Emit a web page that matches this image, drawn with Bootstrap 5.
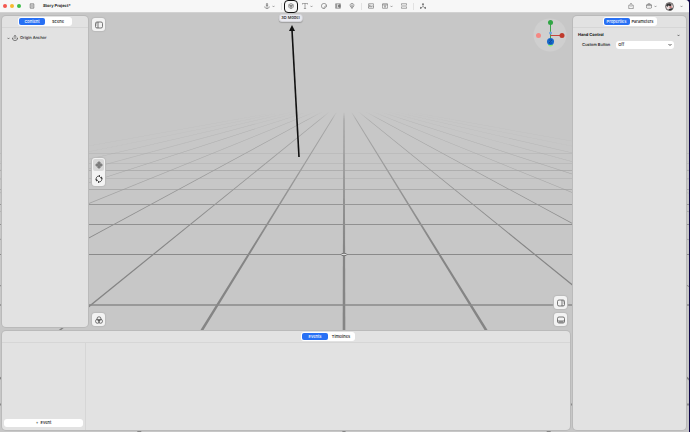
<!DOCTYPE html>
<html lang="en">
<head>
<meta charset="utf-8">
<meta name="viewport" content="width=device-width, initial-scale=1">
<title>Story Project</title>
<link href="https://cdn.jsdelivr.net/npm/bootstrap@5.3.0/dist/css/bootstrap.min.css" rel="stylesheet">
<style>
body{font-family:Inter,"Liberation Sans",sans-serif;font-size:4px;line-height:6px;font-weight:500;color:#111;background:#10084a;text-rendering:geometricPrecision}
.app-window{height:100vh;margin-right:1px;background:#c7c7c7;border-radius:0 4px 0 0;overflow:hidden}
button{font:inherit;color:inherit;border:0;background:none;padding:0}
svg{display:block;fill:none;stroke:currentColor;stroke-width:1.4;flex:none}
.title-bar{height:13px;background:#f7f7f7;border-bottom:1px solid #d2d2d2;display:grid;grid-template-columns:1fr auto 1fr;color:#555}
.title-bar svg{width:6px;height:6px}
.traffic{gap:3px;padding-left:3px}
.dot{width:4px;height:4px;border-radius:50%}
.red{background:#f4574f}.yellow{background:#f6b92e}.green{background:#3dbd48}
.doc-name{font-weight:700;color:#222}
.tool{min-width:6px;height:12px;display:flex;align-items:center;justify-content:center;gap:2px;position:relative}
.title-bar svg.chev,.chev{width:3px;height:3px}
.title-bar svg.avatar{width:9px;height:9px}
.tools{gap:8px}
.window-tools{gap:8px;padding-right:6px}
.divider{width:1px;height:7px;margin:0 -2px;background:#e2e2e2}
.tool.picked::before{content:"";position:absolute;width:14px;height:13px;border:1px solid #111;border-radius:4px;top:0;left:-4px}
.tip{position:absolute;top:14px;left:50%;transform:translateX(-50%);white-space:nowrap;background:#eaeaf0;border:1px solid #d7d7dc;border-radius:3px;padding:0 2px;height:8px;line-height:6px;color:#222;box-shadow:0 1px 1px #0003;z-index:5}
.stage{isolation:isolate;padding:3px 3px 2px 2px;gap:3px}
.floor{position:absolute;inset:0;width:100%;height:100%;z-index:-1}
.pane{background:#e2e2e2;border-radius:4px;box-shadow:0 0 0 1px #bababa}
.side-left{width:86px}.side-right{width:113px}
.pane-head{height:12px;border-bottom:1px solid #d6d6d6;display:flex;justify-content:center;align-items:center}
.seg{background:#fff;border-radius:3px;display:flex;height:9px;padding:1px}
.seg button{border-radius:2px;width:26px;text-align:center;line-height:7px}
.seg button.active{background:#2870f4;color:#fff}
.bottom-pane{height:99px}
.bottom-pane .pane-head{padding-left:84px}
.events{width:84px;border-right:1px solid #d6d6d6;padding:0 2px 3px}
.add{background:#fff;border-radius:3px;height:8px}
.sq{width:13px;height:13px;background:#f3f3f3;border-radius:3px;box-shadow:0 0 1px 1px #bbb;display:flex;align-items:center;justify-content:center;color:#444}
.sq svg{width:8px;height:8px}
.mode{background:#f3f3f3;border-radius:3px;box-shadow:0 0 1px 1px #bbb;width:13px;padding:1px;gap:2px}
.mode button{height:12px;border-radius:2px}
.mode button.active{background:#d8d8d8}
.mode svg{width:8px;height:8px}
.viewport{padding:2px 3px 1px 4px}
.gizmo{width:34px;height:34px}
.tree-row{padding:7px 5px;gap:2px;color:#222}
.tree-row svg.anchor{width:6px;height:6px}
.props{padding:4px 6px 0 5px}
.props h2{font-size:4px;line-height:6px;font-weight:700;color:#111}
.field{gap:6px;padding:3px 6px 0 4px}
.pick{position:relative;flex:1}
.pick select{appearance:none;border:0;border-radius:3px;background:#fff;width:100%;height:8px;padding:0 2px;font:inherit;line-height:8px;color:#222;display:block}
.pick svg{position:absolute;right:2px;top:2px;width:4px;height:4px;pointer-events:none}
.title-bar svg.pointer{position:absolute;left:50%;top:25px;width:16px;height:134px;z-index:4;pointer-events:none}
</style>
<script src="https://cdn.jsdelivr.net/npm/bootstrap@5.3.0/dist/js/bootstrap.bundle.min.js"></script>
</head>
<body>
<div class="app-window d-flex flex-column">
<header class="title-bar">
  <div class="d-flex align-items-center gap-2">
    <div class="d-flex align-items-center traffic"><span class="dot red"></span><span class="dot yellow"></span><span class="dot green"></span></div>
    <button class="tool" aria-label="Home"><svg viewBox="0 0 16 16"><rect x="3" y="1" width="10" height="14" rx="3"/><path d="M3 5h10M3 11h10M6 8h4"/></svg></button>
    <span class="doc-name">Story Project*</span>
  </div>
  <nav class="tools d-flex align-items-center" aria-label="Insert">
    <button class="tool" aria-label="Anchor"><svg viewBox="0 0 16 16"><circle cx="8" cy="3" r="2"/><path d="M8 5v10M5 7h6M2 9c0 4 3 6 6 6s6-2 6-6"/></svg><svg class="chev" viewBox="0 0 8 8"><path d="M1 2l3 3 3-3"/></svg></button>
    <span class="divider"></span>
    <button class="tool picked" aria-label="3D Model"><svg viewBox="0 0 16 16"><path d="M8 1l6 3.500v7L8 15l-6-3.500v-7zM2 4.500L8 8l6-3.500M8 8v7"/><circle cx="8" cy="8" r="3"/></svg>
      <span class="tip">3D Model</span>
      <svg class="pointer" viewBox="0 0 16 134" overflow="visible"><path d="M1 5l7 127" stroke="#111" stroke-width="1.600"/><path d="M1 0l3 6H-2z" fill="#111" stroke="none"/></svg>
    </button>
    <button class="tool" aria-label="Text"><svg viewBox="0 0 16 16"><path d="M1 4V1h14v3M8 1v14M5 15h6"/></svg><svg class="chev" viewBox="0 0 8 8"><path d="M1 2l3 3 3-3"/></svg></button>
    <button class="tool" aria-label="Sticker"><svg viewBox="0 0 16 16"><path d="M15 8A7 7 0 1 0 8 15c3-1 6-4 7-7-4-1-7 2-7 7"/></svg></button>
    <button class="tool" aria-label="Video"><svg viewBox="0 0 16 16"><rect x="1" y="2" width="14" height="12" rx="1"/><path d="M3 5h3M3 8h3M3 11h3M10 5h3v6h-3z" stroke-width="2.500"/></svg></button>
    <button class="tool" aria-label="Light"><svg viewBox="0 0 16 16"><path d="M5 11C1 7 3 1 8 1s7 6 3 10zM6 13h4M7 15h2M8 11V6L6 5M8 6l2-1"/></svg></button>
    <span class="divider"></span>
    <button class="tool" aria-label="Image"><svg viewBox="0 0 16 16"><rect x="1" y="2" width="14" height="12" rx="1"/><circle cx="5" cy="6" r="1"/><path d="M1 12l4-4 3 3 3-4 4 4"/></svg></button>
    <button class="tool" aria-label="Panel"><svg viewBox="0 0 16 16"><rect x="1" y="2" width="14" height="12" rx="1"/><path d="M1 5h14M5 8h6M8 8v5"/></svg><svg class="chev" viewBox="0 0 8 8"><path d="M1 2l3 3 3-3"/></svg></button>
    <button class="tool" aria-label="Scan"><svg viewBox="0 0 16 16"><path d="M1 6V2h14v4M1 10v4h14v-4M1 8h14"/></svg></button>
    <span class="divider"></span>
    <button class="tool" aria-label="Hierarchy"><svg viewBox="0 0 16 16"><path d="M8 4v5M3 13l5-4 5 4"/><g fill="currentColor"><circle cx="8" cy="3" r="1.500"/><circle cx="2" cy="13" r="1.500"/><circle cx="14" cy="13" r="1.500"/></g></svg></button>
  </nav>
  <div class="window-tools d-flex align-items-center justify-content-end">
    <button class="tool me-1" aria-label="Share"><svg viewBox="0 0 16 16"><path d="M5 6H2v9h12V6h-3M8 10V1M5 4l3-3 3 3"/></svg></button>
    <button class="tool" aria-label="Preview"><svg viewBox="0 0 16 16"><rect x="1" y="4" width="14" height="10" rx="3"/><path d="M3 4l2-2h6l2 2M1 7h14"/></svg><svg class="chev" viewBox="0 0 8 8"><path d="M1 2l3 3 3-3"/></svg></button>
    <button class="tool" aria-label="Account"><svg class="avatar" viewBox="0 0 16 16"><circle cx="8" cy="8" r="7" fill="#e9dada" stroke="#444"/><path d="M2 6c2-5 8-5 10-1l-2 3-4-2-2 3zM6 14c1-3 6-3 8-3l-3 4z" fill="#333" stroke="none"/><path d="M8 9h4" stroke="#b55" stroke-width="2"/></svg><svg class="chev ms-1" viewBox="0 0 8 8"><path d="M1 2l3 3 3-3"/></svg></button>
  </div>
</header>
<main class="stage flex-grow-1 d-flex position-relative">
  <svg class="floor" viewBox="0 13 689 419" preserveAspectRatio="xMidYMid slice" aria-hidden="true">
    <defs><linearGradient id="fog" x1="0" y1="112" x2="0" y2="250" gradientUnits="userSpaceOnUse"><stop offset="0" stop-color="#000"/><stop offset=".06" stop-color="#777"/><stop offset=".4" stop-color="#aaa"/><stop offset="1" stop-color="#fff"/></linearGradient>
    <mask id="fade" maskUnits="userSpaceOnUse" x="0" y="0" width="689" height="432"><path d="M0 0h689v432H0z" fill="url(#fog)" stroke="none"/></mask></defs>
    <g mask="url(#fade)">
      <g fill="#858585" stroke="none">
        <path d="M343.300 100h1.400L345.600 432h-3.200z"/>
        <path d="M343.600 100h.8L141 432h-4zM343.600 100h.8L551 432h-4zM343.600 100h.8L-64.500 432h-3zM343.600 100h.8L755.500 432h-3zM343.600 100h.8L-268.500 432h-3zM343.600 100h.8L959.500 432h-3z"/>
        <path opacity=".7" d="M343.600 100h.8L-473 432h-4zM343.600 100h.8L1165 432h-4zM343.600 100h.8L-678 432h-4zM343.600 100h.8L1370 432h-4z"/>
        <path opacity=".45" d="M343.600 100h.8L-882 432h-6zM343.600 100h.8L1576 432h-6zM343.600 100h.8L-1087 432h-6zM343.600 100h.8L1781 432h-6z"/>
        <path opacity=".25" d="M343.600 100h.8L-1292 432h-8zM343.600 100h.8L1987 432h-8zM343.600 100h.8L-1497 432h-8zM343.600 100h.8L2192 432h-8z"/>
      </g>
      <g stroke="#8a8a8a">
        <path d="M0 404.500h689" stroke-width="2"/><path d="M0 305h689" stroke-width="1.700"/>
        <path d="M0 254.500h689M0 224.500h689M0 204.500h689" stroke-width="1"/>
        <path d="M0 189.500h689M0 170.500h689" stroke-width="1" opacity=".6"/>
        <path d="M0 178.500h689M0 163.500h689M0 153.500h689" stroke-width="1" opacity=".3"/>
      </g>
    </g>
    <ellipse cx="344" cy="254.500" rx="3" ry="1.200" stroke="#777" stroke-width="1" fill="#ddd"/>
  </svg>
  <div class="d-flex flex-column flex-grow-1 gap-1">
    <div class="d-flex flex-grow-1">
      <aside class="pane side-left">
        <div class="pane-head"><div class="seg"><button class="active">Content</button><button>Scene</button></div></div>
        <div class="tree-row d-flex align-items-center"><svg class="chev" viewBox="0 0 8 8"><path d="M1 2l3 3 3-3"/></svg><svg class="anchor" viewBox="0 0 16 16"><path d="M8 11V1M5 4l3-3 3 3M4 8H1c0 4 3 7 7 7s7-3 7-7h-3"/></svg><span>Origin Anchor</span></div>
      </aside>
      <section class="viewport flex-grow-1 d-flex justify-content-between" aria-label="Viewport">
        <div class="d-flex flex-column justify-content-between">
          <button class="sq" aria-label="Toggle content"><svg viewBox="0 0 16 16"><rect x="1" y="2" width="14" height="12" rx="3"/><path d="M6 2v12M3 5h1M3 8h1"/></svg></button>
          <div class="mode d-flex flex-column"><button class="active d-flex align-items-center justify-content-center" aria-label="Move"><svg viewBox="0 0 16 16"><path d="M8 1l3 3H9.500v2.500H12V5l3 3-3 3V9.500H9.500V12H11l-3 3-3-3h1.500V9.500H4V11L1 8l3-3v1.500h2.500V4H5z" fill="#888" stroke="#555" stroke-width="1"/></svg></button><button class="d-flex align-items-center justify-content-center" aria-label="Rotate"><svg viewBox="0 0 16 16"><path d="M3 11A6 6 0 0 1 9 2M13 5a6 6 0 0 1-6 9M9 0v4M7 12v4M2 8l1 4 3-2M14 8l-1-4-3 2"/></svg></button></div>
          <button class="sq" aria-label="Materials"><svg viewBox="0 0 16 16"><circle cx="8" cy="5.500" r="4"/><circle cx="5" cy="10.500" r="4"/><circle cx="11" cy="10.500" r="4"/></svg></button>
        </div>
        <div class="d-flex flex-column justify-content-between align-items-end">
          <svg class="gizmo" viewBox="1 1 34 34" aria-hidden="true"><circle cx="18" cy="18" r="16.500" fill="#cfcfcf" stroke="none"/><path d="M18.500 5v18" stroke="#3ca34b" stroke-width="1"/><path d="M18.500 18.500H30" stroke="#c5453e" stroke-width="1"/><g stroke="none"><circle cx="18.500" cy="27" r="2.500" fill="#8fee76"/><circle cx="18.500" cy="5.500" r="2.500" fill="#30a544"/><circle cx="6.500" cy="18.500" r="2.500" fill="#f58782"/><circle cx="30" cy="18.500" r="2.500" fill="#c03a2c"/><circle cx="18.500" cy="16" r="1.500" fill="#6da4e0"/><circle cx="18.500" cy="24.500" r="3.500" fill="#1768cb"/><path d="M17 23h3l-3 3h3" fill="none" stroke="#0d438c" stroke-width=".7"/></g></svg>
          <div class="d-flex flex-column gap-1"><button class="sq" aria-label="Toggle properties"><svg viewBox="0 0 16 16"><rect x="1" y="2" width="14" height="12" rx="3"/><path d="M10 2v12M12 5h1M12 8h1"/></svg></button><button class="sq" aria-label="Toggle events"><svg viewBox="0 0 16 16"><rect x="1" y="2" width="14" height="12" rx="3"/><path d="M1 10h14M4 12h8"/></svg></button></div>
        </div>
      </section>
    </div>
    <section class="pane bottom-pane d-flex flex-column">
      <div class="pane-head"><div class="seg"><button class="active">Events</button><button>Timelines</button></div></div>
      <div class="events flex-grow-1 d-flex flex-column justify-content-end"><button class="add">+ &nbsp;Event</button></div>
    </section>
  </div>
  <aside class="pane side-right">
    <div class="pane-head"><div class="seg"><button class="active">Properties</button><button>Parameters</button></div></div>
    <div class="props">
      <div class="d-flex justify-content-between align-items-center"><h2 class="m-0">Hand Control</h2><svg class="chev" viewBox="0 0 8 8"><path d="M1 2l3 3 3-3"/></svg></div>
      <div class="field d-flex align-items-center"><label for="custom">Custom Button</label><div class="pick"><select id="custom"><option>Off</option></select><svg viewBox="0 0 8 8"><path d="M1 2l3 3 3-3"/></svg></div></div>
    </div>
  </aside>
</main>
</div>
</body>
</html>
